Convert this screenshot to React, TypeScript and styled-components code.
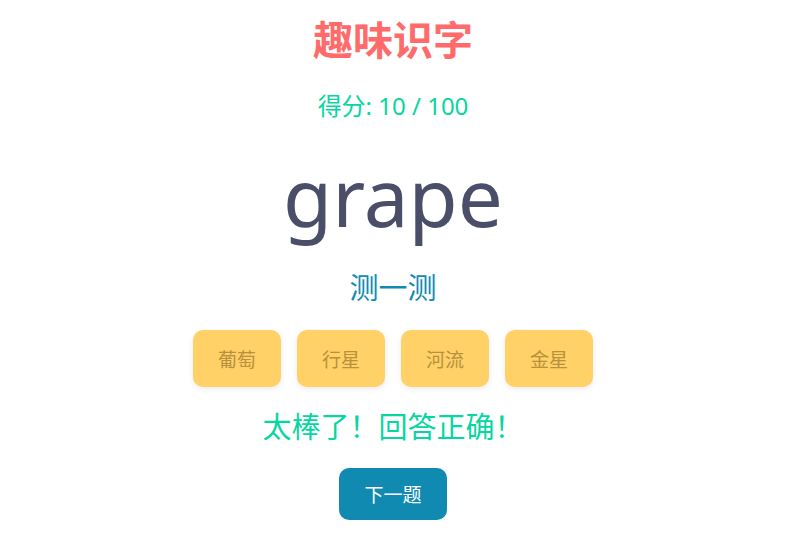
import React from "react";
import styled, { createGlobalStyle } from "styled-components";

const Global = createGlobalStyle`
  html, body { margin: 0; padding: 0; background: #ffffff; }
  body { font-family: "Noto Sans", "Noto Sans CJK SC", sans-serif; }
`;

const Page = styled.div`
  display: flex;
  flex-direction: column;
  align-items: center;
  padding-top: 14px;
  padding-right: 6px;
  text-align: center;
`;

const Title = styled.h1`
  margin: 0;
  font-size: 40px;
  line-height: 52px;
  font-weight: 700;
  color: #ff6b6b;
`;

const Score = styled.div`
  margin-top: 25px;
  font-size: 24px;
  line-height: 30px;
  color: #06d6a0;
`;

const Word = styled.div`
  margin-top: 25px;
  font-size: 80px;
  line-height: 100px;
  color: #4a4e69;
`;

const Prompt = styled.div`
  margin-top: 22px;
  font-size: 29px;
  line-height: 40px;
  color: #118ab2;
`;

const Options = styled.div`
  display: flex;
  gap: 16px;
  margin-top: 22px;
`;

const Option = styled.button`
  width: 88px;
  height: 57px;
  border: none;
  border-radius: 10px;
  background: #ffd166;
  color: #b8903e;
  font-family: inherit;
  font-size: 19px;
  box-shadow: 0 2px 6px rgba(0, 0, 0, 0.08);
  padding: 0;
`;

const Feedback = styled.div`
  margin-top: 20px;
  font-size: 29px;
  line-height: 40px;
  color: #06d6a0;
`;

const Next = styled.button`
  margin-top: 21px;
  width: 108px;
  height: 52px;
  border: none;
  border-radius: 10px;
  background: #118ab2;
  color: #ffffff;
  font-family: inherit;
  font-size: 19px;
  padding: 0;
`;

const options = ["葡萄", "行星", "河流", "金星"];

export default function App() {
  return (
    <>
      <Global />
      <Page>
        <Title>趣味识字</Title>
        <Score>得分: 10 / 100</Score>
        <Word>grape</Word>
        <Prompt>测一测</Prompt>
        <Options>
          {options.map((o) => (
            <Option key={o}>{o}</Option>
          ))}
        </Options>
        <Feedback>太棒了！回答正确！</Feedback>
        <Next>下一题</Next>
      </Page>
    </>
  );
}
